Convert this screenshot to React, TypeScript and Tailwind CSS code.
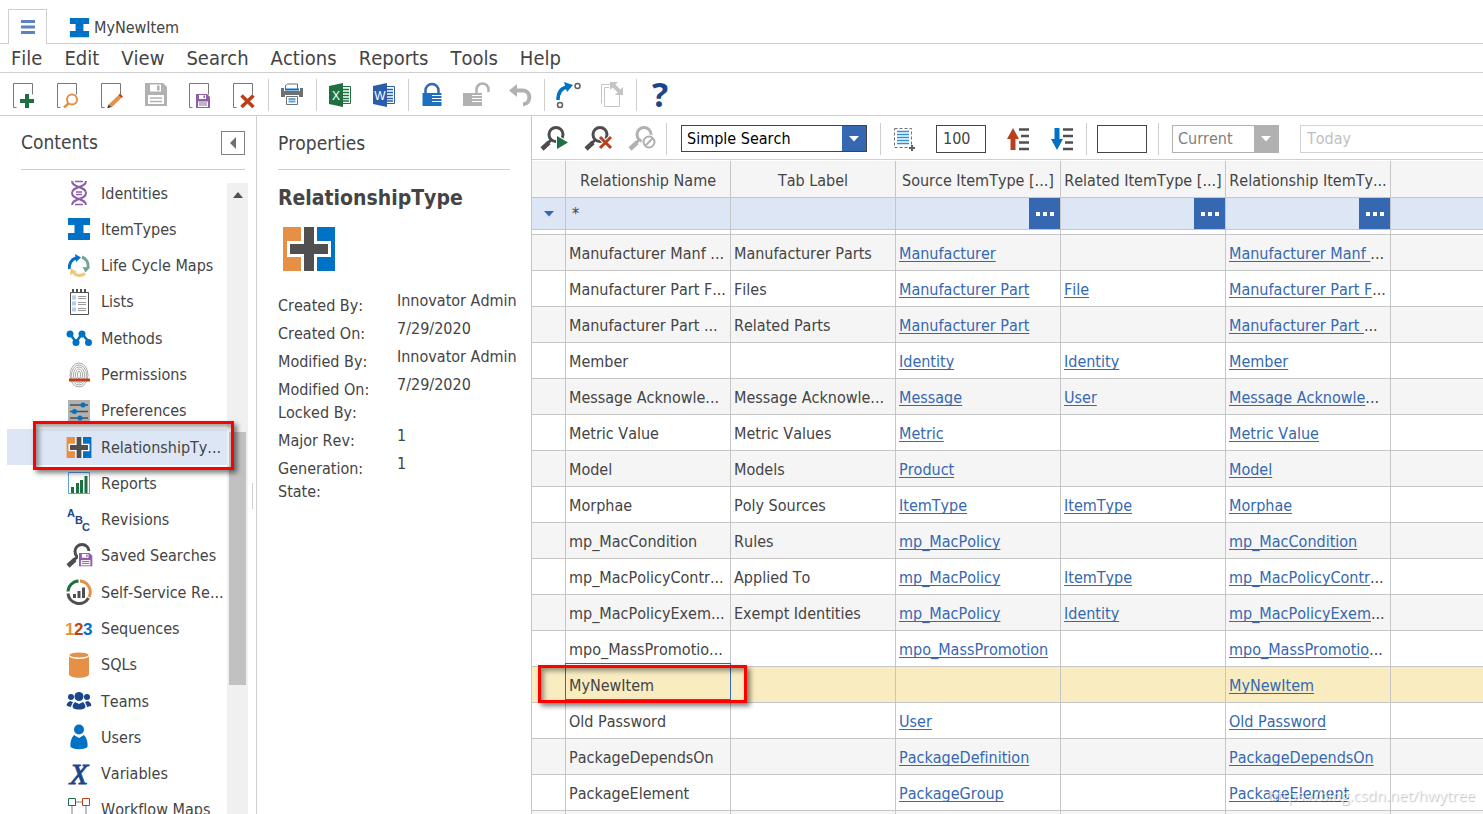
import React, { useState } from 'react';

const Svg = ({ w = 24, h = 26, children }: { w?: number; h?: number; children: React.ReactNode }) => (
  <svg width={w} height={h} viewBox={`0 0 ${w} ${h}`} fill="none" aria-hidden="true" className="shrink-0">
    {children}
  </svg>
);

/* ---------- shared icon parts ---------- */

const Page = () => <path d="M4.500 25.500H1.500V1.500h19v11" stroke="#7a7a7a" />;

const Lens = ({ color = '#4d4d4d' }: { color?: string }) => (
  <>
    <circle cx="16" cy="8.500" r="7" stroke={color} strokeWidth="3" />
    <path d="M11 14L7 18" stroke={color} strokeWidth="3" />
    <path d="M9 16.500L2 23" stroke={color} strokeWidth="4.500" />
  </>
);

const Floppy = ({ color, bg = '#fff' }: { color: string; bg?: string }) => (
  <>
    <path d="M0 0h11l3 3v11H0z" fill={color} />
    <path d="M3 1h7v4H3z" fill={bg} />
    <path d="M7.500 1.500h1.500v2.500H7.500z" fill={color} />
    <path d="M2 7.500h10V13H2z" fill={bg} />
    <path d="M3 9h8M3 11h8" stroke={color} />
  </>
);

const ItemTypeIcon = ({ size = 24 }: { size?: number }) => (
  <svg width={size} height={size} viewBox="0 0 24 24" aria-hidden="true" className="shrink-0">
    <path d="M1 1h22v7h-6.500v8H23v7H1v-7h6.500V8H1z" fill="#0072c6" />
  </svg>
);

const RelationshipIcon = ({ w, h }: { w: number; h: number }) => (
  <svg width={w} height={h} viewBox="0 0 54 44" aria-hidden="true" className="shrink-0">
    <path d="M1 0h19v44H1z" fill="#e68f46" />
    <path d="M53 0H35v44h18z" fill="#0072c6" />
    <path d="M19 0h16v14h14v16H35v14H19V30H5V14h14z" fill="#fff" />
    <path d="M22 0h10v17h14v10H32v17H22V27H8V17h14z" fill="#505050" />
  </svg>
);

const Caret = ({ color = '#fff' }: { color?: string }) => (
  <Svg w={10} h={6}>
    <path d="M0 0h10L5 5.500z" fill={color} />
  </Svg>
);

/* ---------- main toolbar ---------- */

const NewIcon = () => (
  <Svg>
    <Page />
    <path d="M15 12v14M8 19h14" stroke="#1e6f42" strokeWidth="4" />
  </Svg>
);

const ViewIcon = () => (
  <Svg>
    <Page />
    <circle cx="16" cy="17.500" r="5" stroke="#e68f46" strokeWidth="2" />
    <path d="M12.500 21.500L8 25.500" stroke="#e68f46" strokeWidth="2.500" />
  </Svg>
);

const EditIcon = () => (
  <Svg>
    <Page />
    <path d="M10 24L20 14.500" stroke="#e68f46" strokeWidth="4" />
    <path d="M20 14.500l1.500-1.500" stroke="#ba3f1d" strokeWidth="4" />
    <path d="M7 26.500l1.500-4 3 2.500z" fill="#444" />
  </Svg>
);

const SaveIcon = () => (
  <Svg>
    <path d="M1 1h18l4 4v19H1z" fill="#b1b1b1" />
    <path d="M6 2.500h11v7H6z" fill="#fff" />
    <path d="M13 3.500h2.500v5H13z" fill="#b1b1b1" />
    <path d="M4 13h16v9H4z" fill="#fff" />
    <path d="M6 16h12M6 19.500h12" stroke="#b1b1b1" strokeWidth="1.500" />
  </Svg>
);

const SaveCloseIcon = () => (
  <Svg>
    <Page />
    <g transform="translate(8 12)">
      <Floppy color="#8e5ea8" />
    </g>
  </Svg>
);

const DeleteIcon = () => (
  <Svg>
    <Page />
    <path d="M9.500 13.500l12 11.500M21.500 13.500l-12 11.500" stroke="#ba3f1d" strokeWidth="3.500" />
  </Svg>
);

const PrintIcon = () => (
  <Svg>
    <path d="M5.500 7V3.500l2-1.500h10v5" stroke="#707070" />
    <path d="M5 7.500h14" stroke="#0072c6" strokeWidth="2" />
    <path d="M1 6h3v3h16V6h3v9h-4v-2H5v2H1z" fill="#707070" />
    <path d="M6.500 14.500h11v8h-11z" stroke="#707070" fill="#fff" />
    <path d="M8.500 17h7M8.500 19.500h7" stroke="#5ea3da" strokeWidth="2" />
  </Svg>
);

const OfficeIcon = ({ color, letter }: { color: string; letter: string }) => (
  <Svg w={24} h={24}>
    <path d="M14 3.500h8.500v17H14" stroke={color} />
    <path d="M15 6.500h6M15 9.500h6M15 12.500h6M15 15.500h6M15 18h6" stroke={color} strokeWidth="1.500" />
    <path d="M1 3l14-3v24L1 21z" fill={color} />
    <text x="8" y="16.500" textAnchor="middle" fontSize="12" fill="#fff" fontFamily="Liberation Sans, sans-serif">
      {letter}
    </text>
  </Svg>
);

const LockIcon = () => (
  <Svg>
    <path d="M5.500 12V8.500a6.500 6.500 0 0 1 13 0V12" stroke="#3568b0" strokeWidth="2.500" />
    <path d="M2.500 11h19v13h-19z" fill="#1f6fc0" />
    <path d="M12 13.500h10M12 16.500h10M12 19.500h10" stroke="#fff" />
  </Svg>
);

const UnlockIcon = () => (
  <Svg w={28}>
    <path d="M14.500 11V7.500a6 6 0 0 1 12 0V10" stroke="#b1b1b1" strokeWidth="2.500" />
    <path d="M1 11h19v13H1z" fill="#b1b1b1" />
    <path d="M10 13.500h10M10 16.500h10M10 19.500h10" stroke="#fff" />
  </Svg>
);

const UndoIcon = () => (
  <Svg>
    <path d="M7 8.500h8c8 0 9 13 0 14" stroke="#b1b1b1" strokeWidth="4" />
    <path d="M1 8.500L9 2v13z" fill="#b1b1b1" />
  </Svg>
);

const PromoteIcon = () => (
  <Svg w={26} h={28}>
    <path d="M3 19c0-8 4-12 9-13" stroke="#0072c6" strokeWidth="3.500" />
    <path d="M9 1l9 3-6 7z" fill="#0072c6" />
    <circle cx="5" cy="24" r="2.500" stroke="#606060" strokeWidth="1.500" />
    <circle cx="22.500" cy="5" r="2.500" stroke="#606060" strokeWidth="1.500" />
  </Svg>
);

const RedirectIcon = () => (
  <Svg w={24} h={28}>
    <path d="M10 3.500H1.500v19M9 6.500H4.500v19h15V14" stroke="#c4c4c4" />
    <path d="M13 4l7 7" stroke="#c4c4c4" strokeWidth="4" />
    <path d="M10 1h8l-8 8zM23 14V6l-8 8z" fill="#c4c4c4" />
  </Svg>
);

const HelpIcon = () => (
  <Svg w={24} h={40}>
    <text x="12" y="32" textAnchor="middle" fontSize="34" fontWeight="bold" fill="#1b478a" fontFamily="Open Sans, sans-serif">
      ?
    </text>
  </Svg>
);

/* ---------- search toolbar ---------- */

const RunSearchIcon = () => (
  <Svg w={29} h={25}>
    <Lens />
    <path d="M16 8l14 8.500L16 23z" fill="#fff" />
    <path d="M17 10l11 6.500L17 23z" fill="#1e6f42" />
  </Svg>
);

const ClearSearchIcon = () => (
  <Svg w={29} h={25}>
    <Lens />
    <path d="M16 11l11 11M27 11L16 22" stroke="#fff" strokeWidth="5" />
    <path d="M16 11l11 11M27 11L16 22" stroke="#ba3f1d" strokeWidth="3" />
  </Svg>
);

const StopSearchIcon = () => (
  <Svg w={29} h={25}>
    <Lens color="#b1b1b1" />
    <circle cx="21" cy="16" r="7.500" fill="#fff" />
    <circle cx="21" cy="16" r="5.500" stroke="#b1b1b1" strokeWidth="2" />
    <path d="M17 20l8-8" stroke="#b1b1b1" strokeWidth="2" />
  </Svg>
);

const PageSizeIcon = () => (
  <Svg w={24} h={26}>
    <path d="M2.500 2.500h17v19h-17z" stroke="#707070" strokeDasharray="3 2" />
    <path d="M5 5.500h12M5 8.500h12M5 11.500h12M5 14.500h12M5 17.500h12" stroke="#2f8fdb" strokeWidth="1.500" />
    <path d="M20 19v6M17 22h6" stroke="#606060" strokeWidth="2" />
  </Svg>
);

const SortUpIcon = () => (
  <Svg w={24} h={24}>
    <path d="M7 1l6 11H9.500v11h-5V12H1z" fill="#ba3f1d" />
    <path d="M13 2.500h10M15 9h8M13 15.500h10M13 22h10" stroke="#505050" strokeWidth="2.500" />
  </Svg>
);

const SortDownIcon = () => (
  <Svg w={24} h={24}>
    <path d="M7 23L1 12h3.500V1h5v11H13z" fill="#0072c6" />
    <path d="M13 2.500h10M13 9h10M15 15.500h8M13 22h10" stroke="#505050" strokeWidth="2.500" />
  </Svg>
);

/* ---------- contents tree ---------- */

const IdentityIcon = () => (
  <Svg>
    <path d="M5 1c0 7 14 5 14 12S5 18 5 25M19 1c0 7-14 5-14 12s14 5 14 12" stroke="#8e5ea8" strokeWidth="2" />
    <path d="M8 1.500h8M9 12h6M9 14.500h6M8 24.500h8" stroke="#8e5ea8" strokeWidth="1.500" />
  </Svg>
);

const CycleIcon = () => (
  <Svg w={24} h={24}>
    <path d="M2.500 15A9.500 9.500 0 0 1 9 4" stroke="#0072c6" strokeWidth="3" />
    <path d="M8 0l6 3.500L9 8z" fill="#0072c6" />
    <path d="M15 3a9.500 9.500 0 0 1 6 11" stroke="#72a492" strokeWidth="3" />
    <path d="M15.500 13l7.500.5-4.500 5z" fill="#72a492" />
    <path d="M18 19.500a9.500 9.500 0 0 1-11 0" stroke="#edc77a" strokeWidth="3" />
    <path d="M3 21l.5-7 6.500 4z" fill="#edc77a" />
  </Svg>
);

const ListIcon = () => (
  <Svg>
    <path d="M3.500 3.500h18v22h-18z" stroke="#505050" fill="#fff" />
    <path d="M5 2h16" stroke="#505050" strokeWidth="4" strokeDasharray="2 2" />
    <path d="M5 8.500h4M5 14.500h4M5 20.500h4" stroke="#b4cdf5" strokeWidth="4" />
    <path d="M11 7.500h8M11 9.500h8M11 13.500h8M11 15.500h8M11 19.500h8M11 21.500h8" stroke="#9c9c9c" />
  </Svg>
);

const MethodIcon = () => (
  <Svg w={26} h={18}>
    <path d="M4 5l6 8 6-8 7 8" stroke="#0072c6" strokeWidth="2.500" />
    <circle cx="4" cy="5" r="3.500" fill="#0072c6" />
    <circle cx="10" cy="13.500" r="3.500" fill="#0072c6" />
    <circle cx="16" cy="5" r="3.500" fill="#0072c6" />
    <circle cx="22.500" cy="13.500" r="3.500" fill="#0072c6" />
  </Svg>
);

const PermissionIcon = () => (
  <Svg>
    <g stroke="#a8a8a8" strokeWidth="1">
      <ellipse cx="12" cy="13" rx="9" ry="12" />
      <ellipse cx="12" cy="13" rx="7.500" ry="10" />
      <ellipse cx="12" cy="13" rx="5.500" ry="8" />
      <ellipse cx="12" cy="13" rx="3.500" ry="6" />
      <ellipse cx="12" cy="13" rx="1.500" ry="4" />
    </g>
    <path d="M2 18h21" stroke="#ba3f1d" strokeWidth="3" />
  </Svg>
);

const PreferenceIcon = () => (
  <Svg w={24} h={24}>
    <path d="M1 1h22v22H1z" fill="#b1b1b1" />
    <path d="M3 6h18M3 12.500h18M3 19h18" stroke="#505050" strokeWidth="1.500" />
    <circle cx="16" cy="6" r="2.500" fill="#0072c6" />
    <circle cx="7.500" cy="12.500" r="2.500" fill="#0072c6" />
    <circle cx="13" cy="19" r="2.500" fill="#0072c6" />
  </Svg>
);

const ReportIcon = () => (
  <Svg w={24} h={24}>
    <path d="M1.500 1.500h21v21h-21z" stroke="#5ba3dc" fill="#fff" />
    <path d="M5.500 22v-6M10.500 22v-10M14.500 22V9M19 22V5" stroke="#1e6f42" strokeWidth="3" />
  </Svg>
);

const RevisionIcon = () => (
  <Svg>
    <g fill="#1b478a" fontSize="11" fontWeight="bold" fontFamily="Liberation Sans, sans-serif">
      <text x="0" y="10">A</text>
      <text x="8" y="17">B</text>
      <text x="15" y="24">C</text>
    </g>
  </Svg>
);

const SavedSearchIcon = () => (
  <Svg w={27} h={25}>
    <Lens />
    <path d="M12 8h15v17H12z" fill="#fff" />
    <g transform="translate(13 10) scale(.95)">
      <Floppy color="#8e5ea8" />
    </g>
  </Svg>
);

const SelfServiceIcon = () => (
  <Svg w={26} h={26}>
    <path d="M2 12.500A11 11 0 0 1 12.500 2" stroke="#1e6f42" strokeWidth="3" />
    <path d="M14 2a11 11 0 0 1 9 16" stroke="#e68f46" strokeWidth="3" />
    <path d="M2 14.500a11 11 0 0 0 20.500 4.500" stroke="#505050" strokeWidth="3" />
    <path d="M8.500 19v-4M13 19v-7M17.500 19V8.500" stroke="#505050" strokeWidth="3" />
  </Svg>
);

const SequenceIcon = () => (
  <Svg w={28} h={18}>
    <g fontSize="17" fontWeight="bold" fontFamily="Liberation Sans, sans-serif">
      <text x="0" y="15" fill="#e68f46">1</text>
      <text x="9" y="15" fill="#ba3f1d">2</text>
      <text x="18" y="15" fill="#0072c6">3</text>
    </g>
  </Svg>
);

const SqlIcon = () => (
  <Svg>
    <path d="M2 4v18c0 5 20 5 20 0V4z" fill="#e68f46" />
    <ellipse cx="12" cy="3.500" rx="10.500" ry="3.500" fill="#fff" />
    <ellipse cx="12" cy="3" rx="9.500" ry="2.500" fill="#e68f46" />
  </Svg>
);

const TeamIcon = () => (
  <Svg w={26} h={20}>
    <g fill="#1b478a">
      <circle cx="5" cy="6" r="3" />
      <circle cx="21" cy="6" r="3" />
      <path d="M4 10l3 1c-1 2-2 4-2 5l-4-1c-1-2 1-4 3-5zM22 10l-3 1c1 2 2 4 2 5l4-1c1-2-1-4-3-5z" />
      <circle cx="13" cy="5.500" r="4.500" />
      <path d="M9 11l4 2 4-2c2 2 3 4 2 6-3 2-9 2-12 0-1-2 0-4 2-6z" />
    </g>
  </Svg>
);

const UserIcon = () => (
  <Svg>
    <circle cx="12" cy="5.500" r="5" fill="#0072c6" />
    <path d="M7 11l5 3 5-3c3 3 4 8 3.500 12-4 3-13 3-17 0C3 19 4 14 7 11z" fill="#0072c6" />
  </Svg>
);

const VariableIcon = () => (
  <Svg w={26} h={34}>
    <text x="13" y="27" textAnchor="middle" fontSize="30" fontStyle="italic" fill="#1b478a" stroke="#1b478a" fontFamily="Liberation Serif, serif">
      X
    </text>
  </Svg>
);

const WorkflowIcon = () => (
  <Svg>
    <path d="M9 5h6M5 9v9h14V9" stroke="#808080" />
    <path d="M1.500 1.500h7v7h-7z" stroke="#1e6f42" />
    <path d="M15.500 1.500h7v7h-7z" stroke="#ba3f1d" />
  </Svg>
);

/* ---------- data ---------- */

const menus = ['File', 'Edit', 'View', 'Search', 'Actions', 'Reports', 'Tools', 'Help'];

const tools = [
  [
    { label: 'New', icon: <NewIcon /> },
    { label: 'View', icon: <ViewIcon /> },
    { label: 'Edit', icon: <EditIcon /> },
    { label: 'Save', icon: <SaveIcon /> },
    { label: 'Save and close', icon: <SaveCloseIcon /> },
    { label: 'Delete', icon: <DeleteIcon /> },
  ],
  [{ label: 'Print', icon: <PrintIcon /> }],
  [
    { label: 'Export to Excel', icon: <OfficeIcon color="#1e6f42" letter="X" /> },
    { label: 'Export to Word', icon: <OfficeIcon color="#2b5cab" letter="W" /> },
  ],
  [
    { label: 'Lock', icon: <LockIcon /> },
    { label: 'Unlock', icon: <UnlockIcon /> },
    { label: 'Undo', icon: <UndoIcon /> },
  ],
  [
    { label: 'Promote', icon: <PromoteIcon /> },
    { label: 'Redirect', icon: <RedirectIcon /> },
  ],
  [{ label: 'Help', icon: <HelpIcon /> }],
];

const contents = [
  { name: 'Identities', icon: <IdentityIcon /> },
  { name: 'ItemTypes', icon: <ItemTypeIcon /> },
  { name: 'Life Cycle Maps', icon: <CycleIcon /> },
  { name: 'Lists', icon: <ListIcon /> },
  { name: 'Methods', icon: <MethodIcon /> },
  { name: 'Permissions', icon: <PermissionIcon /> },
  { name: 'Preferences', icon: <PreferenceIcon /> },
  { name: 'RelationshipTy...', icon: <RelationshipIcon w={26} h={21} /> },
  { name: 'Reports', icon: <ReportIcon /> },
  { name: 'Revisions', icon: <RevisionIcon /> },
  { name: 'Saved Searches', icon: <SavedSearchIcon /> },
  { name: 'Self-Service Re...', icon: <SelfServiceIcon /> },
  { name: 'Sequences', icon: <SequenceIcon /> },
  { name: 'SQLs', icon: <SqlIcon /> },
  { name: 'Teams', icon: <TeamIcon /> },
  { name: 'Users', icon: <UserIcon /> },
  { name: 'Variables', icon: <VariableIcon /> },
  { name: 'Workflow Maps', icon: <WorkflowIcon /> },
];

const properties = [
  ['Created By:', 'Innovator Admin'],
  ['Created On:', '7/29/2020'],
  ['Modified By:', 'Innovator Admin'],
  ['Modified On:', '7/29/2020'],
  ['Locked By:', ''],
  ['Major Rev:', '1'],
  ['Generation:', '1'],
  ['State:', ''],
];

const columns = ['Relationship Name', 'Tab Label', 'Source ItemType [...]', 'Related ItemType [...]', 'Relationship ItemTy...'];

// name, tab label, source, related, relationship
const rows = [
  ['Manufacturer Manf ...', 'Manufacturer Parts', 'Manufacturer', '', 'Manufacturer Manf ...'],
  ['Manufacturer Part F...', 'Files', 'Manufacturer Part', 'File', 'Manufacturer Part F...'],
  ['Manufacturer Part ...', 'Related Parts', 'Manufacturer Part', '', 'Manufacturer Part ...'],
  ['Member', '', 'Identity', 'Identity', 'Member'],
  ['Message Acknowle...', 'Message Acknowle...', 'Message', 'User', 'Message Acknowle...'],
  ['Metric Value', 'Metric Values', 'Metric', '', 'Metric Value'],
  ['Model', 'Models', 'Product', '', 'Model'],
  ['Morphae', 'Poly Sources', 'ItemType', 'ItemType', 'Morphae'],
  ['mp_MacCondition', 'Rules', 'mp_MacPolicy', '', 'mp_MacCondition'],
  ['mp_MacPolicyContr...', 'Applied To', 'mp_MacPolicy', 'ItemType', 'mp_MacPolicyContr...'],
  ['mp_MacPolicyExem...', 'Exempt Identities', 'mp_MacPolicy', 'Identity', 'mp_MacPolicyExem...'],
  ['mpo_MassPromotio...', '', 'mpo_MassPromotion', '', 'mpo_MassPromotio...'],
  ['MyNewItem', '', '', '', 'MyNewItem'],
  ['Old Password', '', 'User', '', 'Old Password'],
  ['PackageDependsOn', '', 'PackageDefinition', '', 'PackageDependsOn'],
  ['PackageElement', '', 'PackageGroup', '', 'PackageElement'],
  ['', '', '', '', ''],
];

/* ---------- page parts ---------- */

const Separator = () => (
  <div className="w-1 shrink-0 flex justify-center">
    <div className="w-px h-8 bg-[#cfcfcf]" />
  </div>
);

const IconButton = ({ label, children }: { label: string; children: React.ReactNode }) => (
  <button type="button" aria-label={label} className="w-11 h-10 shrink-0 flex items-center justify-center">
    {children}
  </button>
);

const CellLink = ({ text }: { text: string }) => {
  const cut = text.endsWith('...');
  const label = cut ? text.slice(0, -3) : text;
  return (
    <>
      <a href="#" className="text-[#3568b0] underline underline-offset-2 [text-decoration-skip-ink:none]">{label}</a>
      {cut && '...'}
    </>
  );
};

const TabBar = () => (
  <div className="h-11 flex items-end border-b border-[#cfcfcf] pl-2">
    <button type="button" aria-label="Contents" className="w-[39px] h-[35px] -mb-px flex items-center justify-center bg-white border border-b-0 border-[#cfcfcf]">
      <Svg w={14} h={14}>
        <path d="M0 1.500h14M0 7h14M0 12.500h14" stroke="#5b83c4" strokeWidth="3" />
      </Svg>
    </button>
    <button type="button" className="h-8 flex items-center gap-1 pl-[22px]">
      <ItemTypeIcon size={21} />
      <span className="pt-0.5">MyNewItem</span>
    </button>
  </div>
);

const MenuBar = () => (
  <nav className="h-[29px] flex items-center border-b border-[#cfcfcf] text-xl leading-7">
    {menus.map((m) => (
      <button key={m} type="button" className="px-[11px]">{m}</button>
    ))}
  </nav>
);

const ToolBar = () => (
  <div className="h-[43px] flex items-center border-b border-[#cfcfcf] pl-0.5 pt-0.5">
    {tools.map((group, i) => (
      <React.Fragment key={i}>
        {i > 0 && <Separator />}
        {group.map((tool) => (
          <IconButton key={tool.label} label={tool.label}>{tool.icon}</IconButton>
        ))}
      </React.Fragment>
    ))}
  </div>
);

const Sidebar = () => {
  const [active, setActive] = useState('RelationshipTy...');
  return (
    <aside className="w-[257px] shrink-0 flex flex-col border-r border-[#cfcfcf]">
      <div className="h-[54px] ml-[21px] mr-[11px] flex items-center justify-between border-b border-[#cfcfcf]">
        <h2 className="text-[19px]">Contents</h2>
        <button type="button" aria-label="Collapse" className="w-6 h-6 flex items-center justify-center border border-[#808080]">
          <Svg w={6} h={12}>
            <path d="M6 0v12L0 6z" fill="#707070" />
          </Svg>
        </button>
      </div>
      <div className="flex-1 min-h-0 flex pt-[5px] overflow-hidden">
        <ul className="flex-1 min-w-0 h-[653px] flex flex-col pl-[7px]">
          {contents.map((item) => (
            <li key={item.name} className={`flex-1 min-h-0 relative ${active === item.name ? 'bg-[#dce6f5]' : ''}`}>
              <button type="button" onClick={() => setActive(item.name)} className="w-full h-full flex items-center pl-[58px] whitespace-nowrap">
                <span className="w-7 shrink-0 flex justify-center">{item.icon}</span>
                <span className="pl-2 pt-px">{item.name}</span>
              </button>
              {active === item.name && (
                <div className="absolute z-10 left-[26px] -top-2 w-[201px] h-[49px] border-[3px] border-[#f00] shadow-[3px_3px_5px_rgba(0,0,0,0.5),inset_3px_3px_5px_rgba(0,0,0,0.4)] pointer-events-none" />
              )}
            </li>
          ))}
        </ul>
        <div className="w-[21px] shrink-0 mt-2 flex flex-col items-center bg-[#f0f0f0]">
          <div className="h-6 flex items-center">
            <Svg w={10} h={6}>
              <path d="M0 6h10L5 0z" fill="#505050" />
            </Svg>
          </div>
          <div className="mt-[225px] w-[17px] h-[253px] bg-[#c1c1c1]" />
        </div>
        <div className="w-2 shrink-0 flex justify-center pt-[308px]">
          <div className="w-px h-[26px] bg-[#cfcfcf]" />
        </div>
      </div>
    </aside>
  );
};

const Properties = () => (
  <section className="w-[274px] shrink-0 pl-[21px]">
    <h2 className="h-[54px] mr-[21px] flex items-center border-b border-[#cfcfcf] pt-0.5 text-[19px]">Properties</h2>
    <h1 className="pt-3 text-[21px] leading-8 font-bold">RelationshipType</h1>
    <div className="pt-[13px] pb-[18px] pl-1">
      <RelationshipIcon w={54} h={44} />
    </div>
    <dl className="leading-[23px] whitespace-nowrap">
      {properties.map(([label, value]) => (
        <div key={label} className={value ? 'h-7 flex' : 'h-[23px] flex'}>
          <dt className="w-[119px] self-end">{label}</dt>
          <dd className="self-start">{value}</dd>
        </div>
      ))}
    </dl>
  </section>
);

const SearchBar = () => (
  <div className="h-11 flex items-center border-b border-[#cfcfcf] pt-0.5 overflow-hidden">
    <IconButton label="Run search"><RunSearchIcon /></IconButton>
    <IconButton label="Clear search"><ClearSearchIcon /></IconButton>
    <IconButton label="Stop search"><StopSearchIcon /></IconButton>
    <Separator />
    <div className="relative ml-[13px] shrink-0">
      <select aria-label="Search mode" className="w-[186px] h-[27px] appearance-none border border-[#444] bg-white pl-[5px] text-black">
        <option>Simple Search</option>
      </select>
      <span className="absolute right-px top-px w-6 h-[25px] flex items-center justify-center bg-[#3568b0] pointer-events-none">
        <Caret />
      </span>
    </div>
    <div className="ml-[11px] flex items-center shrink-0">
      <Separator />
      <IconButton label="Page size"><PageSizeIcon /></IconButton>
      <input aria-label="Page size" defaultValue="100" className="ml-[10px] w-[50px] h-7 border border-[#444] px-1.5" />
    </div>
    <div className="ml-[10px] flex items-center shrink-0">
      <IconButton label="Sort ascending"><SortUpIcon /></IconButton>
      <IconButton label="Sort descending"><SortDownIcon /></IconButton>
      <Separator />
      <input aria-label="Page" className="ml-[9px] mr-[9px] w-[50px] h-7 border border-[#444] px-1.5" />
      <Separator />
    </div>
    <div className="relative ml-3 shrink-0">
      <select aria-label="Revision" disabled className="w-[107px] h-7 appearance-none border border-[#b1b1b1] bg-white pl-[5px] text-[#808080] opacity-100">
        <option>Current</option>
      </select>
      <span className="absolute right-px top-px w-6 h-[26px] flex items-center justify-center bg-[#b1b1b1] pointer-events-none">
        <Caret />
      </span>
    </div>
    <input aria-label="Date" disabled placeholder="Today" className="ml-[21px] -mr-1 flex-1 min-w-0 h-7 border border-[#d4d4d4] px-1.5 placeholder:text-[#c0c0c0]" />
  </div>
);

const line = 'border-r border-b border-[#c6c6c6]';

const Grid = () => (
  <table className="mt-px w-full table-fixed border-separate border-spacing-0 whitespace-nowrap">
    <colgroup>
      <col className="w-[34px]" />
      {columns.map((c) => (
        <col key={c} className="w-[165px]" />
      ))}
      <col />
    </colgroup>
    <thead>
      <tr className="h-[37px] bg-[#f5f5f5]">
        <th className={line} />
        {columns.map((c) => (
          <th key={c} className={`${line} px-0 pt-[3px] pb-0 font-normal overflow-hidden`}>{c}</th>
        ))}
        <th className="border-b border-[#c6c6c6]" />
      </tr>
      <tr className="h-8 bg-[#dce6f5]">
        <td className={`${line} p-0`}>
          <button type="button" aria-label="Search criteria" className="w-full h-[31px] flex items-center justify-center">
            <Caret color="#3568b0" />
          </button>
        </td>
        {columns.map((c, i) => (
          <td key={c} className={`${line} p-0`}>
            <div className="flex h-[31px]">
              <input aria-label={`Filter ${c}`} defaultValue={i === 0 ? '*' : ''} className="flex-1 min-w-0 px-1.5" />
              {i > 1 && (
                <button type="button" aria-label="Browse" className="w-[31px] shrink-0 flex items-center justify-center gap-[3px] bg-[#3568b0]">
                  <span className="size-1 bg-white" />
                  <span className="size-1 bg-white" />
                  <span className="size-1 bg-white" />
                </button>
              )}
            </div>
          </td>
        ))}
        <td className="border-b border-[#c6c6c6]" />
      </tr>
      <tr className="h-[5px]">
        {[0, 1, 2, 3, 4, 5].map((i) => (
          <td key={i} className={`${line} p-0`} />
        ))}
        <td className="border-b border-[#c6c6c6] p-0" />
      </tr>
    </thead>
    <tbody>
      {rows.map((row, i) => {
        const selected = row[0] === 'MyNewItem';
        const bg = selected ? 'bg-[#f8ecc0]' : i % 2 === 0 ? 'bg-[#f5f5f5]' : 'bg-white';
        return (
          <tr key={i} className={`h-9 ${bg}`}>
            <td className={line} />
            {row.map((text, j) => (
              <td key={j} className={`${line} relative pt-0.5 pb-0 pl-[3px] pr-0`}>
                {j < 2 ? text : text && <CellLink text={text} />}
                {selected && j === 0 && (
                  <>
                    <div className="absolute -left-px -right-px -top-1 bottom-[2px] border border-[#3568b0] pointer-events-none" />
                    <div className="absolute z-10 -left-7 -right-[17px] -top-0.5 -bottom-px border-[3px] border-[#f00] shadow-[3px_3px_5px_rgba(0,0,0,0.5),inset_3px_3px_5px_rgba(0,0,0,0.4)] pointer-events-none" />
                  </>
                )}
              </td>
            ))}
            <td className="border-b border-[#c6c6c6]" />
          </tr>
        );
      })}
    </tbody>
  </table>
);

const App = () => (
  <div className="relative h-screen flex flex-col overflow-hidden bg-white text-base text-[#444] font-['DejaVu_Sans_Condensed','DejaVu_Sans','Noto_Sans',sans-serif] [font-kerning:none] [font-variant-ligatures:none]">
    <TabBar />
    <MenuBar />
    <ToolBar />
    <div className="flex-1 min-h-0 flex">
      <Sidebar />
      <Properties />
      <main className="flex-1 min-w-0 overflow-hidden border-l border-[#c6c6c6]">
        <SearchBar />
        <Grid />
      </main>
    </div>
    <div className="absolute right-2 bottom-2 font-['Open_Sans',sans-serif] text-[15px] text-white/70 [text-shadow:1px_1px_1px_rgba(0,0,0,0.25)] pointer-events-none">
      https://blog.csdn.net/hwytree
    </div>
  </div>
);

export default App;
